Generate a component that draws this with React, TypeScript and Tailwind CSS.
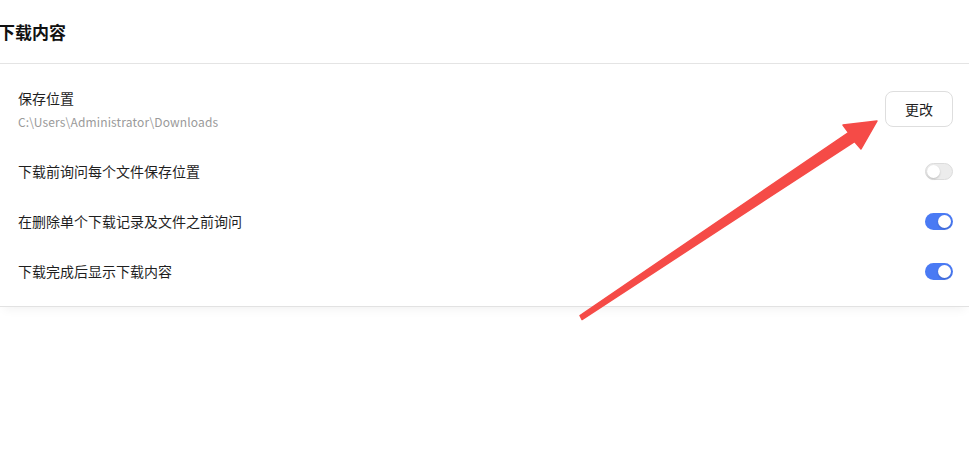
import React from "react";

type Row = {
  label: string;
  on: boolean;
};

const rows: Row[] = [
  { label: "下载前询问每个文件保存位置", on: false },
  { label: "在删除单个下载记录及文件之前询问", on: true },
  { label: "下载完成后显示下载内容", on: true },
];

function Toggle({ on }: { on: boolean }) {
  return (
    <div
      className={
        on
          ? "flex h-[17px] w-[28px] items-center justify-end rounded-full bg-[#4a7af4] px-[2px]"
          : "flex h-[17px] w-[28px] items-center justify-start rounded-full border border-[#dcdcdc] bg-[#ececec] px-[1px]"
      }
    >
      <div className="h-[13px] w-[13px] rounded-full bg-white shadow-[0_1px_2px_rgba(0,0,0,0.2)]" />
    </div>
  );
}

function Arrow() {
  return (
    <svg
      className="pointer-events-none absolute left-0 top-0"
      width="969"
      height="474"
      viewBox="0 0 969 474"
    >
      <polygon
        points="580,315.5 848.5,132.5 843,125 877,121 861,149 854.5,141.5 582,319.5"
        fill="#f54b47"
        stroke="#f54b47"
        strokeWidth="1.5"
        strokeLinejoin="round"
      />
    </svg>
  );
}

export default function App() {
  return (
    <div className="relative h-[474px] w-[969px] overflow-hidden bg-white font-['Noto_Sans_CJK_SC','Noto_Sans',sans-serif] text-[#1f1f1f]">
      <div className="flex h-[64px] items-center border-b border-[#e4e4e4]">
        <h1 className="ml-[-2px] text-[17px] font-bold leading-none text-[#111]">
          下载内容
        </h1>
      </div>

      <div className="border-b border-[#e2e2e2] pb-[10px] shadow-[0_6px_10px_-4px_rgba(0,0,0,0.06)]">
        <div className="flex items-center justify-between pb-[16px] pl-[18px] pr-[16px] pt-[24px]">
          <div>
            <div className="text-[14px] leading-[20px]">保存位置</div>
            <div className="mt-[6px] text-[12px] leading-[16px] tracking-[0.15px] text-[#9a9a9a]">
              C:\Users\Administrator\Downloads
            </div>
          </div>
          <button
            type="button"
            className="h-[36px] w-[68px] rounded-[8px] border border-[#dedede] bg-white text-[14px] text-[#1f1f1f]"
          >
            更改
          </button>
        </div>

        {rows.map((row) => (
          <div
            key={row.label}
            className="flex h-[50px] items-center justify-between pl-[18px] pr-[16px]"
          >
            <span className="text-[14px] leading-[20px]">{row.label}</span>
            <Toggle on={row.on} />
          </div>
        ))}
      </div>

      <Arrow />
    </div>
  );
}
